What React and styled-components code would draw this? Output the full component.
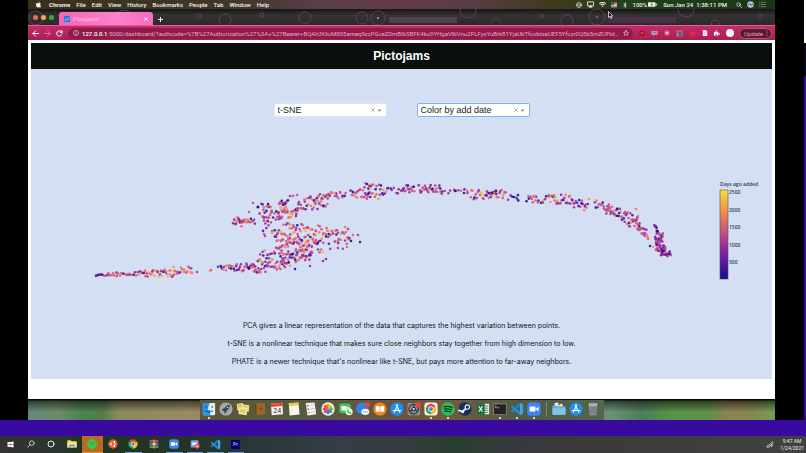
import React from "react";
import styled, { createGlobalStyle, css } from "styled-components";
import {
  FaApple,
  FaWindows,
  FaSpotify,
  FaUbuntu,
  FaPuzzlePiece,
  FaBluetoothB,
  FaWifi,
} from "react-icons/fa";

const Global = createGlobalStyle`
  * { box-sizing: border-box; }
  html, body { margin: 0; padding: 0; background: #000; }
  body { font-family: "Liberation Sans", Arial, sans-serif; overflow: hidden; }
  button, select, input { font: inherit; color: inherit; margin: 0; padding: 0; border: 0; background: none; }
  p, h1 { margin: 0; }
  svg { display: block; }
`;

/* ---------- shell ---------- */

const Screen = styled.div`
  min-height: 100vh;
  display: flex;
  flex-direction: column;
`;

const Stage = styled.div`
  display: flex;
  background: #000;
`;

const Mac = styled.div`
  flex: 1;
  min-width: 0;
  margin: 0 29px 0 28px;
  display: flex;
  flex-direction: column;
`;

const EdgeStrip = styled.div`
  width: 2px;
  background: linear-gradient(#fff 0 43px, #0b0320 43px 76px, #35099c 76px);
`;

const PurpleBand = styled.div`
  height: 16px;
  background: #390a9f;
`;

/* ---------- mac menu bar ---------- */

const MenuBar = styled.nav`
  display: flex;
  align-items: center;
  height: 9px;
  padding: 0 9px 0 7px;
  color: #f4f1ec;
  font-family: Roboto, sans-serif;
  font-size: 6px;
  line-height: 9px;
  white-space: nowrap;
  background: linear-gradient(90deg, #37311b, #41372a 28%, #5b3f4a 40%, #65394b 50%, #573d44 60%, #3f3a1d 70%, #20401c 82%, #1b3415);
`;

const MenuItems = styled.div`
  display: flex;
  align-items: center;
  gap: 6px;
`;

const MenuButton = styled.button`
  font-weight: ${(p) => (p.$bold ? 700 : 500)};
  margin-left: ${(p) => (p.$bold ? "1px" : 0)};
`;

const MenuStatus = styled.div`
  margin-left: auto;
  display: flex;
  align-items: center;
  gap: 5px;
`;

const StatusText = styled.span`
  font-weight: 500;
  margin: ${(p) => (p.$clock ? "0 4px 0 1px" : "0 -4px 0 0")};
`;

/* ---------- browser chrome ---------- */

const TabStrip = styled.div`
  position: relative;
  display: flex;
  align-items: flex-end;
  height: 16px;
  overflow: hidden;
  background: linear-gradient(#171617, #343334 40%, #2c292b);
`;

const StripArt = styled.svg`
  position: absolute;
  inset: 0;
`;

const Lights = styled.div`
  position: relative;
  display: flex;
  gap: 3px;
  padding: 0 5px 5px 5px;
`;

const Light = styled.button`
  width: 5px;
  height: 5px;
  border-radius: 50%;
  background: ${(p) => p.$color};
`;

const Tab = styled.div`
  position: relative;
  display: flex;
  align-items: center;
  width: 94px;
  height: 13px;
  padding: 0 5px;
  gap: 3px;
  border-radius: 3px 3px 0 0;
  background: linear-gradient(90deg, #f763b8, #fb82cb 60%, #f76dbd);
  color: #fbd0ea;
  font-size: 6px;
`;

const TabTitle = styled.span`
  flex: 1;
`;

const PlainButton = styled.button`
  position: relative;
  display: flex;
  align-items: center;
  justify-content: center;
  flex: none;
  color: ${(p) => p.$color || "#fff"};
`;

const NewTab = styled(PlainButton)`
  width: 14px;
  height: 12px;
`;

const Toolbar = styled.div`
  display: flex;
  align-items: center;
  height: 15px;
  padding: 0 3px 0 4px;
  gap: 5px;
  border-top: 1px solid #e55c98;
  background: linear-gradient(#c22c68, #a81f54);
`;

const AddressBar = styled.div`
  flex: 1;
  min-width: 0;
  display: flex;
  align-items: center;
  gap: 3px;
  height: 11px;
  padding: 0 4px 0 5px;
  border-radius: 6px;
  background: #8f1c48;
`;

const AddressInput = styled.input`
  flex: 1;
  min-width: 0;
  height: 9px;
  font-family: Roboto, sans-serif;
  font-size: 6px;
  color: #eaa9c2;
  text-overflow: ellipsis;
  outline: none;
`;

const AddressHost = styled.label`
  font-family: Roboto, sans-serif;
  font-size: 6px;
  font-weight: 500;
  color: #fff;
  margin-right: -3px;
`;

const Extensions = styled.div`
  display: flex;
  align-items: center;
  gap: 6px;
  padding: 0 0 0 1px;
`;

const UpdateButton = styled.button`
  display: flex;
  align-items: center;
  justify-content: space-between;
  width: 33px;
  height: 11px;
  padding: 0 1px 0 4px;
  border: 1px solid #b35873;
  border-radius: 6px;
  background: #5b1c33;
  color: #f3919b;
  font-family: Roboto, sans-serif;
  font-size: 6px;
`;

/* ---------- dashboard page ---------- */

const Page = styled.main`
  padding: 3px 3px 20px;
  background: #fff;
`;

const Title = styled.h1`
  height: 26px;
  background: #0a0f0e;
  color: #fff;
  font-size: 12px;
  line-height: 26px;
  text-align: center;
`;

const Board = styled.section`
  padding: 34px 0 13px;
  background: #d5dff3;
`;

const Filters = styled.div`
  display: flex;
  justify-content: center;
  gap: 30px;
`;

const Dropdown = styled.div`
  display: flex;
  align-items: center;
  width: 113px;
  height: 14px;
  padding: 0 4px 0 3px;
  border: 1px solid ${(p) => (p.$active ? "#7fb4ea" : "#dfe4ee")};
  border-radius: 2px;
  background: #fff;
`;

const DropdownSelect = styled.select`
  flex: 1;
  min-width: 0;
  appearance: none;
  outline: none;
  font-size: 9px;
  line-height: 12px;
  color: #222;
`;

const ClearButton = styled(PlainButton)`
  width: 8px;
  height: 10px;
`;

const Chart = styled.svg`
  width: 100%;
  height: auto;
  font-family: "Open Sans", "DejaVu Sans", sans-serif;
  font-size: 5px;
  font-weight: 600;
  fill: #2a3f5f;
`;

const Notes = styled.div`
  display: flex;
  flex-direction: column;
  gap: 9px;
  color: #101215;
  font-family: Inter, "Liberation Sans", sans-serif;
  font-size: 7px;
  line-height: 9px;
  text-align: center;
`;

/* ---------- dock ---------- */

const Desktop = styled.div`
  display: flex;
  justify-content: center;
  height: 21px;
  background:
    linear-gradient(rgba(0, 0, 0, 0.95) 0 1px, rgba(0, 0, 0, 0.55) 2px, rgba(0, 0, 0, 0) 13px),
    linear-gradient(90deg, #64887b, #708a69 4%, #4c8352 7%, #547c4b 10%, #8b8a5f 12%, #978c65 22%, #7d7850 30%,
      #55563b 60%, #6c9277 78%, #4f7c5b 82%, #5a9148 86%, #5f9049 91%, #8f8252 94%, #82894f 97%, #739f4f);
`;

const Dock = styled.div`
  display: flex;
  align-items: flex-start;
  justify-content: space-between;
  width: 404px;
  height: 20px;
  margin-top: 1px;
  padding: 2px 3px 0 2px;
  background: linear-gradient(90deg, #5c5637, #565b40 25%, #6a5440 50%, #755a3c 60%, #4f5b44 80%, #54664f);
`;

const DockItem = styled.button`
  display: flex;
  flex-direction: column;
  align-items: center;
  gap: 1px;
  width: 14px;
`;

const RunningDot = styled.span`
  width: 2px;
  height: 2px;
  border-radius: 50%;
  background: #fff;
`;

const DockDivider = styled.span`
  width: 1px;
  height: 15px;
  margin: 0 2px;
  background: #7d8671;
`;

/* ---------- windows taskbar ---------- */

const Taskbar = styled.footer`
  flex: 1;
  display: flex;
  justify-content: space-between;
  min-height: 17px;
  background: linear-gradient(90deg, #343233, #2b3531 7%, #20351f 10%, #263428 24%, #2c373c 33%, #343e44 42%, #373c41 50%, #283e30 56%, #38393d 64%, #3b3b3b 75%, #404141);
`;

const TaskItems = styled.div`
  display: grid;
  grid-template-columns: repeat(12, 1fr);
  width: 246px;
`;

const TaskButton = styled.button`
  display: flex;
  align-items: center;
  justify-content: center;
  margin: 0 ${(p) => (p.$open ? 2 : 0)}px;
  border-bottom: 1px solid transparent;
  ${(p) => p.$open && css`border-bottom-color: #6fa6d0;`}
  ${(p) => p.$alert && css`background: #b96a24;border-bottom-color: #e9914a;`}
`;

const Tray = styled.div`
  display: flex;
  align-items: center;
  gap: 6px;
  padding-right: 2px;
  color: #f2f2f2;
`;

const Clock = styled.time`
  font-family: Roboto, "Open Sans", sans-serif;
  font-size: 5px;
  line-height: 7px;
  text-align: center;
  min-width: 21px;
`;

const Cursor = styled.svg`
  position: absolute;
  left: 580px;
  top: 2px;
`;

/* ---------- small drawings ---------- */

function Svg({ size = 14, box = 16, children, ...rest }) {
  return (
    <svg width={size} height={size} viewBox={`0 0 ${box} ${box}`} aria-hidden="true" {...rest}>
      {children}
    </svg>
  );
}

const line = { fill: "none", stroke: "currentColor", strokeLinecap: "round", strokeLinejoin: "round" };

const ChromeLogo = ({ size, tile }) => (
  <Svg size={size}>
    {tile && <rect x=".5" y=".5" width="15" height="15" rx="3.5" fill="#f5f4f2" />}
    <g transform={tile ? "translate(1.6 1.6) scale(.8)" : undefined}>
      <path d="M8 8L1.5 4.3A7.5 7.5 0 0 1 14.5 4.3Z" fill="#e94235" />
      <path d="M8 8L14.5 4.3A7.5 7.5 0 0 1 8 15.5Z" fill="#fbbc05" />
      <path d="M8 8V15.5A7.5 7.5 0 0 1 1.5 4.3Z" fill="#34a353" />
      <circle cx="8" cy="8" r="3.8" fill="#fff" />
      <circle cx="8" cy="8" r="2.9" fill="#4285f4" />
    </g>
  </Svg>
);

const CodeLogo = ({ size }) => (
  <Svg size={size}>
    <path d="M11.3.8L15 2.5V13.5L11.3 15.2Z" fill="#35a5ee" />
    <path d="M11.3.8V5L2.7 11.9L.8 10.6Z" fill="#1c83ce" />
    <path d="M11.3 15.2V11L2.7 4.1L.8 5.4Z" fill="#2290dc" />
  </Svg>
);

const ZoomLogo = ({ size }) => (
  <Svg size={size}>
    <rect x=".3" y=".3" width="15.4" height="15.4" rx="4" fill="#3f86f5" />
    <rect x="3" y="5.2" width="6.8" height="5.6" rx="1.2" fill="#fff" />
    <path d="M10.3 7.3L13.2 5.3V10.7L10.3 8.7Z" fill="#fff" />
  </Svg>
);

const StoreLogo = () => (
  <Svg>
    <circle cx="8" cy="8" r="7.6" fill="#1c8df2" />
    <path d="M8.8 3.4L4.8 11.6M7.2 3.4L11.2 11.6M3.6 9.7H12.4" {...line} stroke="#fff" strokeWidth="1.4" />
  </Svg>
);

const Finder = () => (
  <Svg>
    <rect x="1" y="1" width="14" height="14" rx="1" fill="#e6eef5" />
    <path d="M1 1H9Q6.6 5 7 9H9Q9 12 9.8 15H1Z" fill="#2596ee" />
    <path d="M4.4 4.8V6.4M11.6 4.8V6.4M3.6 10.3Q8 13.4 12.4 10.3" {...line} stroke="#173f66" />
  </Svg>
);

const Launchpad = () => (
  <Svg>
    <circle cx="8" cy="8" r="7.5" fill="#a4a9b0" />
    <path d="M12.4 3.2Q8 3.6 6 7.4L4 7.8L3.4 10L5.3 10L6.3 11L6 13L8.2 12L8.8 9.8Q12.3 7.6 12.4 3.2Z" fill="#394049" />
    <circle cx="9.8" cy="6" r="1" fill="#c6ccd4" />
  </Svg>
);

const Stickies = () => (
  <Svg>
    <path d="M.8 2L8 1.2L9 9L1.6 10Z" fill="#e8d878" />
    <path d="M7 2.6L15.2 3.6L14.6 11L6.4 9.6Z" fill="#f1e38a" />
    <path d="M3.4 6.8L13 8.2L12.2 15L2.8 13.8Z" fill="#f3e793" />
    <path d="M5 9.2L11 10.1M5 11.2L10 12M9 5L13 5.6M3 4.2L6 4" {...line} stroke="#a99745" strokeWidth=".7" />
  </Svg>
);

const Book = () => (
  <Svg>
    <path d="M2 1.6L11.5.8L13.8 2V14L4.2 15.2L2.4 14Z" fill="#99652f" />
    <path d="M2 1.6L4.1 2.8L4.2 15.2L2.4 14Z" fill="#6e4620" />
    <circle cx="9" cy="7.6" r="2" fill="#84552a" />
  </Svg>
);

const CalendarText = styled.text`
  font: 8px Roboto, sans-serif;
`;

const Calendar = () => (
  <Svg>
    <path d="M1 2L14 .8L15 14L2 15.2Z" fill="#f4f2ee" />
    <path d="M1 2L14 .8L14.3 4.6L1.3 5.6Z" fill="#de4a3f" />
    <CalendarText x="8.2" y="12.6" textAnchor="middle" fill="#333">24</CalendarText>
  </Svg>
);

const NotesPad = () => (
  <Svg>
    <path d="M2 1.5L13 .6L14.4 14.4L3 15.4Z" fill="#f7f5ea" />
    <path d="M2 1.5L13 .6L13.3 3.6L2.3 4.6Z" fill="#ecc63c" />
  </Svg>
);

const Reminders = () => (
  <Svg>
    <path d="M2 1.2L12 .6L14 14L4 15.4Z" fill="#f3f3f3" />
    <circle cx="4.3" cy="4" r="1" fill="#e5493d" />
    <circle cx="4.9" cy="8" r="1" fill="#3b84e0" />
    <circle cx="5.5" cy="12" r="1" fill="#e7843b" />
    <path d="M7 3.8L11 3.5M7.6 7.8L11.6 7.5M8 11.8L12 11.5" {...line} stroke="#b9b9b9" strokeWidth=".8" />
  </Svg>
);

const petals = ["#f2a01e", "#d9cf2a", "#7fbd4b", "#3f9fa5", "#4c78c8", "#a25bb0", "#dd4c6c", "#ee5a2c"];
const Photos = () => (
  <Svg>
    <circle cx="8" cy="8" r="7.6" fill="#f5f4f1" />
    {petals.map((c, i) => (
      <ellipse key={c} cx="8" cy="4.6" rx="1.9" ry="2.8" fill={c} transform={`rotate(${i * 45} 8 8)`} />
    ))}
  </Svg>
);

const FaceTime = () => (
  <Svg>
    <rect x=".4" y="1.8" width="13" height="11" rx="2.4" fill="#42c658" />
    <rect x="2.8" y="4.6" width="6" height="5" rx="1" fill="#fff" />
    <path d="M9.2 6.6L11.6 5V9Z" fill="#fff" />
    <circle cx="11.6" cy="11.2" r="4" fill="#e7f6e8" />
    <path d="M10 9.4Q10 12.6 13.2 12.8" {...line} stroke="#35b34c" strokeWidth="1.5" />
  </Svg>
);

const Messages = () => (
  <Svg>
    <circle cx="7" cy="7.4" r="6.8" fill="#2a86ea" />
    <ellipse cx="10.6" cy="11.2" rx="4.6" ry="3.6" fill="#f1f5fa" />
    <path d="M8.4 11.2h.1M10.6 11.2h.1M12.8 11.2h.1" {...line} stroke="#61788f" strokeWidth="1.2" />
    <circle cx="13" cy="3" r="2.9" fill="#ee4037" />
  </Svg>
);

const Books = () => (
  <Svg>
    <circle cx="8" cy="8" r="7.5" fill="#f2861f" />
    <path d="M7.6 5.2Q5.4 4 3.2 4.8V11.2Q5.4 10.4 7.6 11.6ZM8.4 5.2Q10.6 4 12.8 4.8V11.2Q10.6 10.4 8.4 11.6Z" fill="#fff" />
  </Svg>
);

const Settings = () => (
  <Svg>
    <rect x=".6" y="1" width="14.4" height="14" rx="2" fill="#8e9091" />
    <circle cx="7.6" cy="8" r="5.4" fill="none" stroke="#2f3234" strokeWidth="1.6" strokeDasharray="1.6 .4" />
    <circle cx="7.6" cy="8" r="2" fill="#cfd1d2" stroke="#2f3234" strokeWidth="1.2" />
    <path d="M7.6 6V3M9.3 9L12 10.6M5.9 9L3.2 10.6" {...line} stroke="#2f3234" strokeWidth="1.2" />
    <circle cx="13" cy="3" r="2.9" fill="#ee4037" />
  </Svg>
);

const Excel = () => (
  <Svg>
    <rect x="7" y="2" width="8" height="12" fill="#edf2ee" />
    <path d="M9.5 4.5H14M9.5 7H14M9.5 9.5H14M9.5 12H14" stroke="#2a7c4c" strokeWidth="1" />
    <path d="M1 2.4L10 1V15L1 13.6Z" fill="#1f7244" />
    <path d="M3.6 5.4L7 10.6M7 5.4L3.6 10.6" {...line} stroke="#fff" strokeWidth="1.3" />
  </Svg>
);

const Terminal = () => (
  <Svg>
    <rect x=".6" y="1.6" width="14.8" height="13" rx="1" fill="#9b9b98" />
    <rect x="1.2" y="2.6" width="13.6" height="11.4" fill="#232323" />
    <path d="M2.8 4.4L4 5.4L2.8 6.4M5 6.6H6.6" {...line} stroke="#e8e8e8" strokeWidth=".8" />
  </Svg>
);

const SpotifyDock = () => (
  <Svg>
    <circle cx="8" cy="8" r="7.7" fill="#20c25c" />
    <path d="M3.4 5.6Q8.4 4 12.8 6.4M4 8.2Q8.2 7 12 9M4.5 10.7Q8 9.8 11.2 11.4" {...line} stroke="#12301f" strokeWidth="1.4" />
  </Svg>
);

const SteamDock = () => (
  <Svg>
    <circle cx="8" cy="8" r="7.6" fill="#16305a" />
    <path d="M.8 9.6L5 11L10.6 6" {...line} stroke="#e6edf5" strokeWidth="2.2" />
    <circle cx="10.7" cy="5.8" r="2.5" fill="#16305a" stroke="#e6edf5" strokeWidth="1.3" />
    <circle cx="5.4" cy="11" r="1.8" fill="#e6edf5" />
  </Svg>
);

const Folder = () => (
  <Svg>
    <path d="M3 1L7 .6L7.6 4L11 1.6L13 5H3Z" fill="#f0f1ee" />
    <path d="M.6 4H6L7.2 5.2H15.4V14.6H.6Z" fill="#6db3d6" />
    <path d="M.6 7H15.4V14.6H.6Z" fill="#82c4e4" />
  </Svg>
);

const Trash = () => (
  <Svg>
    <path d="M3 2.8L12.8 2L11.8 15H4.4Z" fill="#94969a" />
    <ellipse cx="8" cy="2.6" rx="5" ry="1.8" fill="#c6c8ca" />
    <path d="M5.4 5L6 14M8 5V14M10.6 5L10.2 14" stroke="#5b5e61" strokeWidth=".8" />
    <path d="M5 3L7 1.4L9.6 2.8L11 2" {...line} stroke="#5f6265" strokeWidth=".8" />
  </Svg>
);

const dockApps = [
  ["Finder", <Finder />, true],
  ["Launchpad", <Launchpad />],
  ["Stickies", <Stickies />],
  ["Contacts", <Book />],
  ["Calendar", <Calendar />],
  ["Notes", <NotesPad />],
  ["Reminders", <Reminders />],
  ["Photos", <Photos />],
  ["FaceTime", <FaceTime />],
  ["Messages", <Messages />],
  ["Books", <Books />],
  ["App Store", <StoreLogo />],
  ["System Preferences", <Settings />],
  ["Chrome", <ChromeLogo tile />, true],
  ["Spotify", <SpotifyDock />, true],
  ["Steam", <SteamDock />],
  ["Excel", <Excel />],
  ["Terminal", <Terminal />, true],
  ["Code", <CodeLogo />, true],
  ["Zoom", <ZoomLogo />, true],
];
const dockPlaces = [
  ["Downloads", <Folder />],
  ["Applications", <StoreLogo />],
  ["Trash", <Trash />],
];

const Explorer = () => (
  <Svg size={10}>
    <path d="M.6 2H6L7.4 3.6H15.4V13.6H.6Z" fill="#f5cf5d" />
    <path d="M.6 5H15.4V13.6H.6Z" fill="#fbe08a" />
    <path d="M4 13.8V9H12V13.8H10V11.2H6V13.8Z" fill="#3f9de0" />
  </Svg>
);

const Archive = () => (
  <Svg size={10}>
    <rect x="1" y="1.6" width="14" height="4" fill="#b8476a" />
    <rect x="1" y="6" width="14" height="4" fill="#4b6fc0" />
    <rect x="1" y="10.4" width="14" height="4" fill="#4f9a4c" />
    <rect x="6.4" y="1" width="3.4" height="14" fill="#c98a45" />
    <rect x="5.6" y="6.4" width="5" height="3.2" fill="#ecd08c" />
  </Svg>
);

const DiscordTile = () => (
  <Svg size={10}>
    <rect x="1" y="2" width="12.6" height="11.4" rx="2" fill="#8b93d8" />
    <path d="M3.4 5.6H11V9.8H3.4Z" fill="#f3f3ff" />
    <circle cx="11.6" cy="11.6" r="3.9" fill="#e94f51" />
    <circle cx="11.6" cy="11.6" r="1.4" fill="#fff" />
  </Svg>
);

const PremiereText = styled.text`
  font: 700 8px "Open Sans", sans-serif;
`;

const Premiere = () => (
  <Svg size={9}>
    <rect width="16" height="16" rx="2" fill="#07006b" />
    <PremiereText x="8" y="11" textAnchor="middle" fill="#b9a6ff">Pr</PremiereText>
  </Svg>
);

const UbuntuTile = () => (
  <Svg size={10}>
    <circle cx="8" cy="8" r="7.6" fill="#e2512b" />
    <circle cx="8" cy="8" r="3.4" fill="none" stroke="#fff" strokeWidth="1.6" strokeDasharray="5.6 1.5" />
    <circle cx="3.4" cy="8" r="1.3" fill="#fff" />
    <circle cx="10.3" cy="4" r="1.3" fill="#fff" />
    <circle cx="10.3" cy="12" r="1.3" fill="#fff" />
  </Svg>
);

const taskApps = [
  { name: "Start", icon: <FaWindows size={7} color="#fff" /> },
  {
    name: "Search",
    icon: <Svg size={8} color="#eee"><circle cx="9.6" cy="6.2" r="4.6" {...line} strokeWidth="1.5" /><path d="M6.2 9.6L1.6 14.4" {...line} strokeWidth="1.5" /></Svg>,
  },
  { name: "Cortana", icon: <Svg size={8} color="#eee"><circle cx="8" cy="8" r="6" {...line} strokeWidth="2" /></Svg> },
  { name: "File Explorer", icon: <Explorer /> },
  { name: "Spotify", icon: <FaSpotify size={10} color="#1ed760" />, alert: true },
  { name: "Ubuntu", icon: <UbuntuTile /> },
  { name: "Chrome", icon: <ChromeLogo size={10} />, open: true },
  { name: "WinRAR", icon: <Archive /> },
  { name: "Zoom", icon: <ZoomLogo size={10} />, open: true },
  { name: "Discord", icon: <DiscordTile />, open: true },
  { name: "Code", icon: <CodeLogo size={11} />, open: true },
  { name: "Premiere Pro", icon: <Premiere />, open: true },
];

/* ---------- scatter data ---------- */

const plasma = ["#1a1490", "#5a12a3", "#8320a5", "#9c2a9c", "#ae3590", "#cc4c7c", "#db6170", "#ec7a5c", "#f59549", "#fbb03c"];

/* x0, y0, x1, y1, half height, point count, warmth */
const bands = [
  [95, 275, 105, 275, 1, 10, 0.2],
  [106, 274, 131, 275, 2, 24, 0.45],
  [131, 274, 145, 273, 2, 12, 0.5],
  [144, 273, 175, 273, 4, 40, 0.55],
  [173, 270, 193, 270, 4, 22, 0.55],
  [218, 268, 232, 267, 3, 12, 0.45],
  [231, 268, 256, 267, 4, 36, 0.4],
  [252, 268, 285, 264, 6, 46, 0.5],
  [257, 258, 282, 252, 6, 30, 0.5],
  [280, 262, 312, 252, 7, 60, 0.5],
  [280, 250, 324, 245, 7, 66, 0.5],
  [326, 246, 350, 243, 5, 10, 0.4],
  [302, 240, 318, 240, 6, 18, 0.55],
  [274, 237, 302, 236, 6, 32, 0.5],
  [288, 228, 330, 231, 5, 40, 0.55],
  [326, 232, 350, 237, 5, 26, 0.55],
  [262, 224, 288, 232, 9, 20, 0.4],
  [233, 223, 244, 221, 5, 24, 0.45],
  [243, 221, 255, 221, 3, 16, 0.5],
  [257, 209, 272, 207, 5, 20, 0.35],
  [262, 219, 280, 213, 6, 22, 0.4],
  [278, 208, 288, 204, 6, 26, 0.5],
  [280, 215, 298, 213, 4, 26, 0.6],
  [294, 207, 312, 202, 6, 28, 0.4],
  [310, 207, 328, 205, 3, 14, 0.5],
  [313, 199, 332, 196, 4, 30, 0.45],
  [333, 197, 346, 192, 4, 14, 0.4],
  [350, 194, 370, 193, 4, 26, 0.5],
  [364, 186, 384, 187, 3, 16, 0.4],
  [366, 196, 384, 196, 3, 14, 0.5],
  [383, 192, 402, 190, 4, 14, 0.3],
  [402, 189, 415, 189, 4, 20, 0.25],
  [418, 190, 442, 190, 5, 36, 0.45],
  [442, 192, 470, 191, 3, 14, 0.4],
  [470, 195, 506, 195, 5, 42, 0.45],
  [487, 193, 497, 193, 2, 10, 0.3],
  [508, 197, 520, 197, 4, 9, 0.25],
  [526, 199, 546, 202, 4, 20, 0.35],
  [546, 199, 570, 200, 5, 36, 0.45],
  [570, 203, 588, 206, 5, 24, 0.3],
  [594, 204, 610, 208, 4, 20, 0.5],
  [606, 210, 622, 214, 5, 32, 0.45],
  [622, 218, 640, 222, 7, 36, 0.45],
  [636, 224, 648, 234, 5, 26, 0.35],
  [654, 224, 659, 234, 2, 12, 0.3],
  [655, 238, 663, 238, 5, 34, 0.3],
  [656, 246, 666, 248, 5, 36, 0.3],
  [660, 254, 671, 254, 3, 24, 0.25],
];

/* x, y, plasma index */
const strays = [
  [197, 272, 4], [211, 270, 5], [210, 271, 8], [253, 203, 5], [249, 212, 5], [290, 196, 4], [293, 196, 5], [297, 195, 5],
  [345, 227, 7], [348, 229, 4], [353, 235, 6], [358, 235, 4], [360, 242, 0], [351, 241, 0], [347, 247, 6], [338, 248, 4],
  [295, 269, 0], [310, 266, 3], [323, 261, 3], [326, 259, 2], [367, 184, 0], [370, 188, 8], [455, 191, 0], [464, 193, 0],
  [518, 195, 0], [535, 196, 7], [589, 199, 8], [617, 209, 0], [636, 209, 7], [629, 226, 3], [648, 239, 6], [650, 246, 0],
  [653, 247, 8], [656, 250, 6], [264, 234, 5], [265, 236, 4], [272, 233, 8], [276, 236, 3],
];

function makePoints() {
  let seed = 20210124;
  const rand = () => {
    seed = (seed * 1664525 + 1013904223) % 4294967296;
    return seed / 4294967296;
  };
  const points = [];
  bands.forEach(([x0, y0, x1, y1, half, count, warmth]) => {
    for (let i = 0; i < Math.round(count * 0.8); i += 1) {
      const t = (i + rand()) / Math.round(count * 0.8);
      const cold = rand() < 0.1;
      const spread = (rand() + rand() + rand() - 1.5) * 0.42;
      const tone = cold ? 0 : Math.max(1, Math.min(9, Math.round((warmth + 0.06 + spread) * 9)));
      points.push([x0 + (x1 - x0) * t, y0 + (y1 - y0) * t + (rand() * 2 - 1) * half, tone]);
    }
  });
  return points.concat(strays);
}

const points = makePoints();
const ticks = [2500, 2000, 1500, 1000, 500];

function Scatter() {
  return (
    <Chart viewBox="31 117 741 204" role="img" aria-label="Songs by t-SNE, coloured by days ago added">
      <defs>
        <linearGradient id="plasma" x1="0" y1="1" x2="0" y2="0">
          {["#140f88", "#3f1396", "#6a1aa0", "#8f2898", "#b04088", "#cc5a74", "#e2755f", "#f2954a", "#f8b63c", "#f8e03c"].map((c, i) => (
            <stop key={c} offset={i / 9} stopColor={c} />
          ))}
        </linearGradient>
      </defs>
      {points.map(([x, y, tone], i) => (
        <circle key={i} cx={x.toFixed(1)} cy={y.toFixed(1)} r="1.3" fill={plasma[tone]} opacity=".9" />
      ))}
      <text x="720" y="186">Days ago added</text>
      <rect x="720" y="190" width="8" height="89" fill="url(#plasma)" stroke="#47516b" strokeWidth=".6" />
      {ticks.map((value, i) => (
        <text key={value} x="729" y={194 + i * 17.5}>{value}</text>
      ))}
    </Chart>
  );
}

/* ---------- sections ---------- */

function MacMenu() {
  return (
    <MenuBar aria-label="Menu bar">
      <MenuItems>
        <FaApple size={7} />
        {["Chrome", "File", "Edit", "View", "History", "Bookmarks", "People", "Tab", "Window", "Help"].map((m, i) => (
          <MenuButton key={m} $bold={i === 0}>{m}</MenuButton>
        ))}
      </MenuItems>
      <MenuStatus>
        <Svg size={6}><circle cx="8" cy="8" r="6.4" {...line} strokeWidth="2" /><path d="M3 8H13" {...line} strokeWidth="2" /></Svg>
        <Svg size={7}><path d="M4 11H1V2H15V11H12" {...line} strokeWidth="2" /><path d="M8 8L13 15H3Z" fill="currentColor" /></Svg>
        <FaWifi size={7} />
        <Svg size={6}>
          <rect y="2" width="16" height="12" fill="#eee" />
          <path d="M0 4H16M0 8H16M0 12H16" stroke="#c84a50" strokeWidth="2" />
          <rect y="2" width="8" height="6" fill="#41579a" />
        </Svg>
        <FaBluetoothB size={6} />
        <StatusText>100%</StatusText>
        <Svg size={9}><rect x="0" y="4" width="13.5" height="8" rx="1.4" fill="currentColor" /><rect x="14.2" y="6.4" width="1.6" height="3.2" fill="currentColor" /><path d="M7.6 4.6L5.2 8.4H8.2L6.4 11.4" fill="none" stroke="#31401f" strokeWidth="1" /></Svg>
        <StatusText $clock>Sun Jan 24&nbsp; 1:38:11 PM</StatusText>
        <Svg size={6}><circle cx="6.6" cy="6.6" r="4.8" {...line} strokeWidth="1.8" /><path d="M10.4 10.4L15 15" {...line} strokeWidth="1.8" /></Svg>
        <Svg size={7}><circle cx="8" cy="8" r="7.4" fill="#b9cbd4" /><path d="M3 9Q6 3 8 8T13 7" {...line} stroke="#5e5fb5" strokeWidth="2.4" /></Svg>
        <Svg size={7} color="#8a9a7c"><path d="M1 3H2M5 3H15M1 8H2M5 8H15M1 13H2M5 13H15" {...line} strokeWidth="1.6" /></Svg>
      </MenuStatus>
    </MenuBar>
  );
}

const rings = [[8, 9, 7], [96, 9, 8], [277, 9, 6], [334, 9, 6], [350, 9, 7], [440, 1, 8], [468, 15, 5], [539, 12, 6], [569, 8, 8], [658, 0, 8], [687, 15, 4], [171, 7, 2], [234, 6, 2], [197, 11, 6], [514, 7, 2], [732, 7, 2]];

function Tabs() {
  return (
    <TabStrip>
      <StripArt width="100%" height="16" aria-hidden="true">
        <g fill="none" stroke="#7c4169" strokeWidth="1" opacity=".75">
          {rings.map(([x, y, r]) => <circle key={x} cx={x} cy={y} r={r} />)}
        </g>
        <rect x="361" y="8" width="68" height="6" fill="#694b61" opacity=".6" />
        <rect x="580" y="8" width="68" height="6" fill="#5d3152" opacity=".6" />
        <circle cx="350" cy="9" r="1" fill="#c59ab5" />
        <circle cx="569" cy="8" r="1" fill="#a05c88" />
      </StripArt>
      <Lights>
        <Light $color="#ee6a5e" aria-label="Close" />
        <Light $color="#e9b53e" aria-label="Minimise" />
        <Light $color="#35a853" aria-label="Zoom" />
      </Lights>
      <Tab>
        <Svg size={6}><rect width="16" height="16" rx="1" fill="#2181d8" /><path d="M3 12L6 8L9 10L13 5" {...line} stroke="#bfe3ff" strokeWidth="2" /></Svg>
        <TabTitle>Pictojams</TabTitle>
        <PlainButton aria-label="Close tab"><Svg size={4}><path d="M2 2L14 14M14 2L2 14" {...line} strokeWidth="3" /></Svg></PlainButton>
      </Tab>
      <NewTab aria-label="New tab"><Svg size={5}><path d="M8 1V15M1 8H15" {...line} strokeWidth="3" /></Svg></NewTab>
      <Cursor width="5" height="8" viewBox="0 0 10 16" aria-hidden="true">
        <path d="M1 1V13L4 10.4L6 15L8 14L6 9.8H9.6Z" fill="#111" stroke="#fff" strokeWidth="1.4" />
      </Cursor>
    </TabStrip>
  );
}

function AddressRow() {
  return (
    <Toolbar>
      <PlainButton aria-label="Back"><Svg size={7}><path d="M15 8H2M8 2L2 8L8 14" {...line} strokeWidth="2.2" /></Svg></PlainButton>
      <PlainButton aria-label="Forward" $color="#d97ba0"><Svg size={7}><path d="M1 8H14M8 2L14 8L8 14" {...line} strokeWidth="2" /></Svg></PlainButton>
      <PlainButton aria-label="Reload"><Svg size={7}><path d="M13.6 9A6 6 0 1 1 12 3.8L13.6 5.4M13.8 1.4V5.6H9.6" {...line} strokeWidth="2.2" /></Svg></PlainButton>
      <AddressBar>
        <Svg size={6} color="#f3cbd9"><circle cx="8" cy="8" r="7" {...line} strokeWidth="1.6" /><path d="M8 7.4V12M8 4.2V4.4" {...line} strokeWidth="1.8" /></Svg>
        <AddressHost htmlFor="address">127.0.0.1</AddressHost>
        <AddressInput
          id="address"
          readOnly
          value=":5000/dashboard/?authcode=%7B%27Authorization%27%3A+%27Bearer+BQAh3KtoM805ameq9zzPGceZ0mBIbSBFK4ku9YHgaVlbVnu2PLFyxYuBrk81YjaUbTfuvbtxaUEF5Yfczr0Q5b5mZUFtdtce9otLq72xKfVbWm4hT0aRzYc"
        />
        <PlainButton aria-label="Bookmark" $color="#f3cbd9"><Svg size={6}><path d="M8 1L10 6L15 6.4L11 9.6L12.4 14.8L8 11.8L3.6 14.8L5 9.6L1 6.4L6 6Z" {...line} strokeWidth="1.6" /></Svg></PlainButton>
      </AddressBar>
      <Extensions>
        <Svg size={6}><circle cx="8" cy="8" r="7" fill="#a30d18" /><path d="M4 8H12" stroke="#f4b7b7" strokeWidth="2" /></Svg>
        <Svg size={7}><path d="M1 2H15V11H9L6 14V11H1Z" fill="#b9a1b4" /><path d="M4 6H12" stroke="#74677d" strokeWidth="2" /></Svg>
        <Svg size={6}><circle cx="8" cy="8" r="7.4" fill="#ec5f72" /><circle cx="8" cy="8" r="2.6" fill="#fde5e8" /></Svg>
        <Svg size={7}><rect x="1" y="1" width="14" height="14" rx="1" fill="#9f8496" /><path d="M3 5H13M7 9H12V12H7Z" stroke="#4f4052" strokeWidth="2" fill="none" /></Svg>
        <Svg size={7}><path d="M8 1L11 5L15 8L11 11L8 15L5 11L1 8L5 5Z" fill="#f8283c" /></Svg>
        <Svg size={6}><path d="M2 0H10L14 4V16H2Z" fill="#f5e9ee" /><path d="M5 7H11M5 11H11" stroke="#b99ca8" strokeWidth="1.4" /></Svg>
        <FaPuzzlePiece size={6} color="#fff" />
        <Svg size={8}><circle cx="8" cy="8" r="8" fill="#f8f3f5" /></Svg>
      </Extensions>
      <UpdateButton>
        Update
        <Svg size={6}><path d="M8 2V2.2M8 8V8.2M8 14V14.2" {...line} strokeWidth="2.6" /></Svg>
      </UpdateButton>
    </Toolbar>
  );
}

function Picker({ label, options, active }) {
  return (
    <Dropdown $active={active}>
      <DropdownSelect aria-label={label} defaultValue={options[0]}>
        {options.map((o) => <option key={o}>{o}</option>)}
      </DropdownSelect>
      <ClearButton aria-label={`Clear ${label}`} $color="#888"><Svg size={4}><path d="M2 2L14 14M14 2L2 14" {...line} strokeWidth="2.6" /></Svg></ClearButton>
      <Svg size={5} box={10}><path d="M1 3H9L5 7.4Z" fill="#8c8c8c" /></Svg>
    </Dropdown>
  );
}

const DockButton = ({ app: [name, icon, running] }) => (
  <DockItem aria-label={name}>
    {icon}
    {running && <RunningDot />}
  </DockItem>
);

export default function App() {
  return (
    <Screen>
      <Global />
      <Stage>
        <Mac>
          <MacMenu />
          <Tabs />
          <AddressRow />
          <Page>
            <Title>Pictojams</Title>
            <Board>
              <Filters>
                <Picker label="Technique" options={["t-SNE", "PCA", "PHATE"]} />
                <Picker label="Color" options={["Color by add date", "Color by playlist"]} active />
              </Filters>
              <Scatter />
              <Notes>
                <p>PCA gives a linear representation of the data that captures the highest variation between points.</p>
                <p>t-SNE is a nonlinear technique that makes sure close neighbors stay together from high dimension to low.</p>
                <p>PHATE is a newer technique that's nonlinear like t-SNE, but pays more attention to far-away neighbors.</p>
              </Notes>
            </Board>
          </Page>
          <Desktop>
            <Dock>
              {dockApps.map((app) => <DockButton key={app[0]} app={app} />)}
              <DockDivider />
              {dockPlaces.map((app) => <DockButton key={app[0]} app={app} />)}
            </Dock>
          </Desktop>
        </Mac>
        <EdgeStrip />
      </Stage>
      <PurpleBand />
      <Taskbar>
        <TaskItems>
          {taskApps.map((t) => (
            <TaskButton key={t.name} aria-label={t.name} $open={t.open} $alert={t.alert}>{t.icon}</TaskButton>
          ))}
        </TaskItems>
        <Tray>
          <Svg size={8}><path d="M1.4 12Q2 8.4 5.4 8.8Q8 9.4 6.4 12Q4.6 14.6 3 12.6M6 8L12.6 1.8L14.4 3.4L8.6 10M10 8.6L13 7.6L11 11.4" {...line} strokeWidth="1.4" /></Svg>
          <Clock>9:47 AM<br />1/24/2021</Clock>
        </Tray>
      </Taskbar>
    </Screen>
  );
}
